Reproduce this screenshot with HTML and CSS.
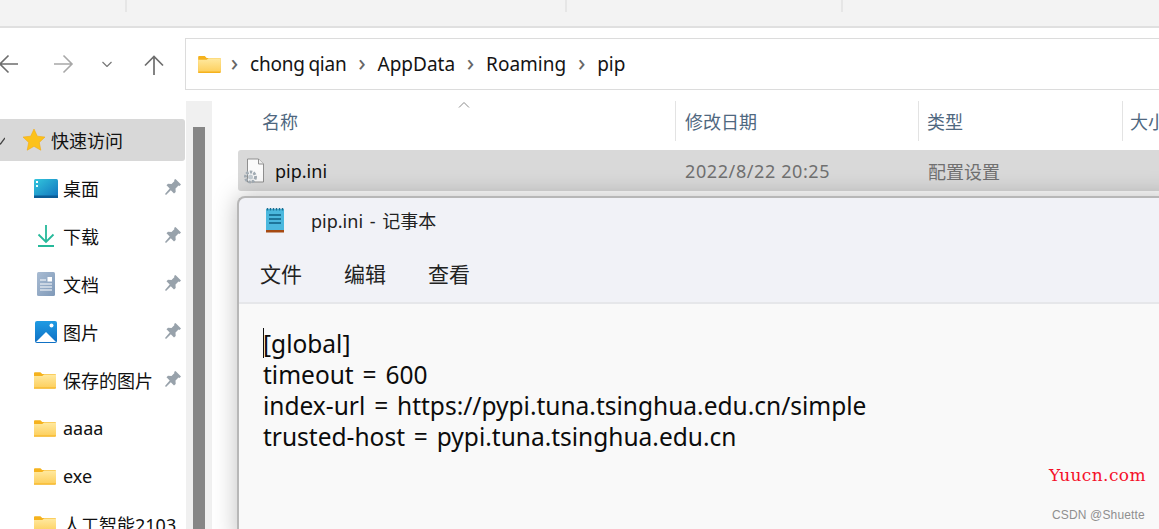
FILE: index.html
```html
<!DOCTYPE html>
<html lang="zh">
<head>
<meta charset="utf-8">
<title>pip.ini</title>
<link rel="stylesheet" href="styles.css">
</head>
<body>
<svg width="0" height="0" class="defs">
  <defs>
    <linearGradient id="fg" x1="0" y1="0" x2="0" y2="1"><stop offset="0" stop-color="#ffe9a0"/><stop offset="1" stop-color="#fdd05f"/></linearGradient>
    <linearGradient id="dg" x1="0" y1="0" x2="1" y2="1"><stop offset="0" stop-color="#33c6dd"/><stop offset="1" stop-color="#0f72bd"/></linearGradient>
    <linearGradient id="pg" x1="0" y1="0" x2="0" y2="1"><stop offset="0" stop-color="#1f9be3"/><stop offset="1" stop-color="#0f70c4"/></linearGradient>
    <linearGradient id="tg" x1="0" y1="0" x2="1" y2="1"><stop offset="0" stop-color="#a9bcd3"/><stop offset="1" stop-color="#7f99b8"/></linearGradient>
    <symbol id="folder" viewBox="0 0 24 18">
      <path d="M1 0h6l2 2h14a1 1 0 0 1 1 1v14a1 1 0 0 1-1 1H0V1a1 1 0 0 1 1-1z" fill="#f5b21d"/>
      <path d="M0 4h9l2-1.500h13V16.500H0z" fill="url(#fg)"/>
    </symbol>
    <symbol id="pin" viewBox="0 0 16 16">
      <path d="M10.500 0L16 5.500l-1.500 1.500-1-.5-3 3 .2 3.500-1.700 1.500-3.200-3.200L1 16l-1-1 4.700-5.500L1.500 6.300 3 4.700l3.500.2 3-3-.5-1z" fill="#98a2ab"/>
    </symbol>
  </defs>
</svg>

<div class="tabs">
  <span class="tab tab-a"></span><span class="tab tab-b"></span><span class="tab tab-c"></span>
</div>

<div class="nav">
  <div class="nav-buttons">
    <svg class="nav-back" width="22" height="22" viewBox="0 0 22 22"><path d="M20 11H2M10.500 2.500L2 11l8.500 8.500" fill="none" stroke="#6e6e6e" stroke-width="1.600"/></svg>
    <svg class="nav-fwd" width="22" height="22" viewBox="0 0 22 22"><path d="M2 11h18M11.500 2.500L20 11l-8.500 8.500" fill="none" stroke="#a8a8a8" stroke-width="1.600"/></svg>
    <svg class="nav-down" width="10" height="6" viewBox="0 0 10 6"><path d="M.5 1l4.500 4.500L9.500 1" fill="none" stroke="#777" stroke-width="1.200"/></svg>
    <svg class="nav-up" width="20" height="20" viewBox="0 0 20 20"><path d="M10 20V1.500M1 10.500L10 1.500l9 9" fill="none" stroke="#6e6e6e" stroke-width="1.700"/></svg>
  </div>
  <div class="address">
    <svg class="addr-folder" width="23" height="17"><use href="#folder"/></svg>
    <span class="chev">›</span><span class="crumb crumb-user">chong qian</span>
    <span class="chev">›</span><span class="crumb">AppData</span>
    <span class="chev">›</span><span class="crumb">Roaming</span>
    <span class="chev">›</span><span class="crumb">pip</span>
  </div>
</div>

<div class="main">
  <aside class="sidebar">
    <div class="side-row quick">
      <svg class="caret" width="6" height="8" viewBox="0 0 6 8"><path d="M0 6.500L1.500 7 6 1" fill="none" stroke="#444" stroke-width="1.300"/></svg>
      <svg class="star" width="24" height="24" viewBox="0 0 24 24"><path d="M12 1l3.300 7.200 7.700.9-5.700 5.300 1.500 7.800L12 18.300l-6.800 3.900 1.500-7.800L1 9.100l7.700-.9z" fill="#fcc21b" stroke="#f4a90f" stroke-width=".6"/></svg>
      <span class="side-label">快速访问</span>
    </div>
    <div class="side-row">
      <svg class="side-icon" width="24" height="19" viewBox="0 0 24 19"><rect width="24" height="19" rx="1.500" fill="url(#dg)"/><rect y="16.500" width="24" height="2.500" fill="#0b5c96"/><rect x="2" y="2" width="2" height="2" fill="#fff"/><rect x="2" y="6" width="2" height="2" fill="#dff"/></svg>
      <span class="side-label">桌面</span>
      <svg class="pin" width="16" height="16"><use href="#pin"/></svg>
    </div>
    <div class="side-row">
      <svg class="side-icon" width="24" height="24" viewBox="0 0 24 24"><path d="M12 1v16M4.500 10.500L12 18l7.500-7.500" fill="none" stroke="#26b99a" stroke-width="1.800"/><rect x="4" y="21" width="16" height="2" fill="#26b99a"/></svg>
      <span class="side-label">下载</span>
      <svg class="pin" width="16" height="16"><use href="#pin"/></svg>
    </div>
    <div class="side-row">
      <svg class="side-icon" width="24" height="24" viewBox="0 0 24 24"><rect x="3" y="0" width="18" height="24" rx="1.500" fill="url(#tg)"/><path d="M6 8h6M6 12h12M6 15h12M6 18h12" stroke="#fff" stroke-width="1.200"/><rect x="13.500" y="5" width="4.500" height="4.500" fill="#fff"/></svg>
      <span class="side-label">文档</span>
      <svg class="pin" width="16" height="16"><use href="#pin"/></svg>
    </div>
    <div class="side-row">
      <svg class="side-icon" width="24" height="22" viewBox="0 0 24 22"><rect x="1" width="22" height="22" rx="2" fill="url(#pg)"/><circle cx="17.500" cy="4.500" r="2" fill="#fff"/><path d="M2 21l10-10 10 10z" fill="#fff"/></svg>
      <span class="side-label">图片</span>
      <svg class="pin" width="16" height="16"><use href="#pin"/></svg>
    </div>
    <div class="side-row">
      <svg class="side-icon" width="22" height="17"><use href="#folder"/></svg>
      <span class="side-label">保存的图片</span>
      <svg class="pin" width="16" height="16"><use href="#pin"/></svg>
    </div>
    <div class="side-row">
      <svg class="side-icon" width="22" height="17"><use href="#folder"/></svg>
      <span class="side-label">aaaa</span>
    </div>
    <div class="side-row">
      <svg class="side-icon" width="22" height="17"><use href="#folder"/></svg>
      <span class="side-label">exe</span>
    </div>
    <div class="side-row">
      <svg class="side-icon" width="22" height="17"><use href="#folder"/></svg>
      <span class="side-label">人工智能2103</span>
    </div>
  </aside>
  <div class="scrollbar"><div class="thumb"></div></div>
  <section class="files">
    <div class="file-head">
      <span class="col col-name">名称</span>
      <span class="col col-date">修改日期</span>
      <span class="col col-type">类型</span>
      <span class="col col-size">大小</span>
      <svg class="sort" width="12" height="6" viewBox="0 0 12 6"><path d="M1 5.500l5-5 5 5" fill="none" stroke="#8a8a8a"/></svg>
    </div>
    <div class="file-row">
      <svg class="file-icon" width="21" height="26" viewBox="0 0 21 26"><path d="M3.500 1h11l5 5v18h-16z" fill="#fafafa" stroke="#8f8f8f"/><path d="M14.500 1v5h5" fill="#eee" stroke="#8f8f8f"/><circle cx="6.500" cy="19" r="5" fill="none" stroke="#a3adb5" stroke-width="3" stroke-dasharray="2.500 1.200"/><circle cx="6.500" cy="19" r="2.500" fill="#c3cbd1"/></svg>
      <span class="file-name">pip.ini</span>
      <span class="file-date">2022/8/22 20:25</span>
      <span class="file-type">配置设置</span>
    </div>
  </section>
</div>

<div class="notepad">
  <div class="np-title">
    <svg class="np-icon" width="20" height="25" viewBox="0 0 20 25"><rect x="1" y="1" width="18" height="21" fill="#4bb8de"/><rect x="1" y="22" width="18" height="2.500" fill="#a64a12"/><path d="M2.500 0v2.500M5.500 0v2.500M8.500 0v2.500M11.500 0v2.500M14.500 0v2.500M17.500 0v2.500" stroke="#1a6f93" stroke-width="1.500"/><path d="M4 7h12M4 11h12M4 15h12" stroke="#0f5f84" stroke-width="1.700"/></svg>
    <span class="np-name">pip.ini - 记事本</span>
  </div>
  <div class="np-menu"><span>文件</span><span>编辑</span><span>查看</span></div>
  <div class="np-text">
    <span class="np-caret"></span>
    <div>[global]</div>
    <div>timeout = 600</div>
    <div>index-url = https://pypi.tuna.tsinghua.edu.cn/simple</div>
    <div>trusted-host = pypi.tuna.tsinghua.edu.cn</div>
  </div>
</div>

<div class="mark-yuucn">Yuucn.com</div>
<div class="mark-csdn">CSDN @Shuette</div>
</body>
</html>
```

FILE: styles.css
```css
* { box-sizing: border-box; }
html, body { margin: 0; padding: 0; }
body {
  position: relative;
  width: 1159px;
  height: 529px;
  overflow: hidden;
  background: #fff;
  color: #111;
  font-family: "Noto Sans", "Noto Sans CJK SC", sans-serif;
  font-size: 18px;
}
.defs { position: absolute; }

.tabs {
  display: flex;
  height: 28px;
  background: #f3f3f3;
  border-bottom: 2px solid #e0e0e0;
}
.tab { height: 12px; border-right: 2px solid #e6e6e6; }
.tab-a { width: 127px; }
.tab-b { width: 440px; }
.tab-c { width: 276px; }

.nav {
  display: flex;
  height: 73px;
  padding-top: 10px;
}
.nav-buttons {
  display: flex;
  align-items: center;
  width: 185px;
  height: 52px;
}
.nav-back { margin-left: -2px; }
.nav-fwd { margin-left: 32px; }
.nav-down { margin-left: 28px; }
.nav-up { margin: 2px 0 0 32px; }

.address {
  display: flex;
  flex: 1;
  align-items: center;
  height: 52px;
  margin-right: -4px;
  border: 1px solid #dcdcdc;
  padding-left: 12px;
  font-size: 19px;
  color: #141414;
}
.addr-folder { margin-right: -2px; }
.chev { width: 31px; text-align: center; color: #666; font-size: 24px; line-height: 1; margin-top: -4px; }
.crumb { white-space: nowrap; margin-top: -1px; }
.crumb-user { word-spacing: -1px; letter-spacing: -.22px; }

.main { display: flex; height: 428px; }

.sidebar { width: 186px; flex: none; padding-top: 18px; }
.side-row {
  position: relative;
  display: flex;
  align-items: center;
  height: 48px;
  padding-left: 34px;
  white-space: nowrap;
}
.quick {
  height: 42px;
  margin-bottom: 3px;
  margin-right: 1px;
  padding-left: 22px;
  background: #d8d8d8;
  border-radius: 0 3px 3px 0;
}
.caret { position: absolute; left: -1px; top: 18px; }
.star { margin-right: 6px; }
.side-icon { flex: none; }
.side-label { position: absolute; left: 63px; font-size: 18px; }
.quick .side-label { left: 51px; }
.pin { position: absolute; left: 165px; top: 15px; }

.scrollbar {
  width: 26px;
  flex: none;
  padding: 26px 7px 0 7px;
  background: #f0f0f0;
}
.thumb { width: 12px; height: 100%; background: #868686; }

.files {
  flex: 1;
  min-width: 0;
  padding-left: 26px;
}
.file-head {
  position: relative;
  height: 49px;
  color: #4f6880;
  font-size: 18px;
}
.col {
  position: absolute;
  top: 0;
  height: 40px;
  line-height: 43px;
  padding-left: 9px;
  border-left: 1px solid #e3e3e3;
  white-space: nowrap;
}
.col-name { left: 24px; border-left: 0; padding-left: 0; }
.col-date { left: 437px; }
.col-type { left: 680px; padding-left: 8px; }
.col-size { left: 884px; padding-left: 7px; }
.sort { position: absolute; left: 220px; top: 1px; }

.file-row {
  position: relative;
  display: flex;
  align-items: center;
  height: 41px;
  background: #d9d9d9;
  border-radius: 3px 0 0 3px;
}
.file-icon { margin-left: 6px; margin-top: 1px; flex: none; }
.file-name { margin-left: 10px; }
.file-date { position: absolute; left: 447px; color: #707070; letter-spacing: .6px; }
.file-type { position: absolute; left: 690px; color: #707070; }

.notepad {
  position: absolute;
  left: 237px;
  top: 196px;
  width: 940px;
  height: 345px;
  background: #f1f2f7;
  border: 2px solid #b7b7b7;
  border-right: 0;
  border-radius: 8px 0 0 0;
  box-shadow: 0 0 24px rgba(0, 0, 0, .26);
}
.np-title {
  display: flex;
  align-items: center;
  height: 44px;
  padding-left: 26px;
  color: #222;
}
.np-name { margin-left: 26px; font-size: 18px; word-spacing: 2px; }
.np-menu {
  display: flex;
  gap: 42px;
  height: 62px;
  padding: 10px 0 0 21px;
  line-height: 44px;
  font-size: 21px;
  color: #222;
  border-bottom: 2px solid #e6e7ea;
}
.np-text {
  position: relative;
  height: 240px;
  padding: 24px 0 0 24px;
  background: #f9f9f9;
  font-size: 24.500px;
  word-spacing: 2.500px;
  line-height: 31px;
  color: #0c0c0c;
}
.np-text div { white-space: nowrap; }
.np-caret {
  position: absolute;
  left: 24px;
  top: 24px;
  width: 1px;
  height: 30px;
  background: #111;
}

.mark-yuucn {
  position: absolute;
  left: 1049px;
  top: 464px;
  color: #f5102a;
  font-family: "DejaVu Serif", serif;
  font-size: 17px;
  letter-spacing: .4px;
  line-height: 22px;
}
.mark-csdn {
  position: absolute;
  left: 1052px;
  top: 508px;
  color: #8f8f8f;
  font-family: "Liberation Sans", sans-serif;
  font-size: 12px;
  letter-spacing: .15px;
  line-height: 14px;
}
```
